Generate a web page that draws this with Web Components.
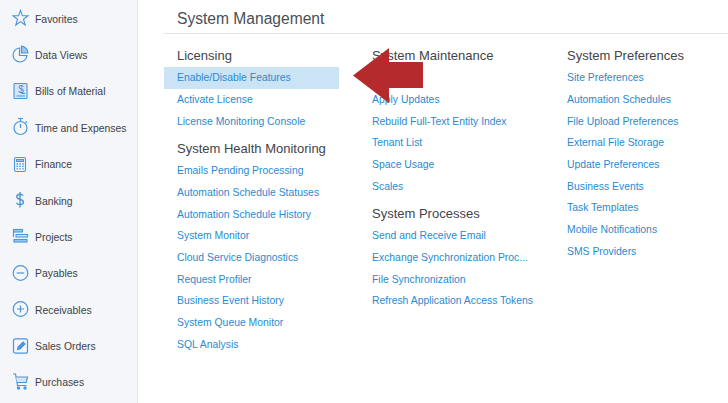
<!DOCTYPE html>
<html><head><meta charset="utf-8">
<style>
html,body{margin:0;padding:0;height:403px;width:728px;overflow:hidden;background:#fff;font-family:"Liberation Sans",Arial,sans-serif}
</style></head><body>
<template id="t-app"><style>
:host{display:flex;width:728px;height:403px;overflow:hidden;position:relative}
</style><slot name="side"></slot><slot></slot><slot name="over"></slot></template>

<template id="t-side"><style>
:host{display:flex;flex-direction:column;flex:none;width:138px;height:403px;box-sizing:border-box;background:#f4f6f9;border-right:1px solid #e4e7ea;padding-top:.9px}
</style><slot></slot></template>

<template id="t-nav"><style>
:host{display:flex;align-items:center;flex:none;height:36.4px;padding-left:10px;gap:5px;font-size:10.4px;color:#3c4248;white-space:nowrap}
.i{width:20px;height:20px;flex:none;display:flex;margin-top:-2px}
</style><span class="i"><slot name="icon"></slot></span><slot></slot></template>

<template id="t-main"><style>
:host{display:block;flex:1;padding:0 0 0 26px;min-width:0}
h1{margin:0;font:400 15.6px/37px "Liberation Sans",Arial,sans-serif;color:#4a4f55;padding-left:13px;border-bottom:1px solid #e3e5e8;height:33px;box-sizing:content-box}
.cols{display:flex;gap:20px;padding-top:10.3px}
</style><h1><slot name="title"></slot></h1><div class="cols"><slot></slot></div></template>

<template id="t-col"><style>
:host{display:block;width:175px;flex:none}
</style><slot></slot></template>

<template id="t-head"><style>
:host{display:block;height:23px;padding-left:13px;font-size:13px;line-height:23px;color:#3f444a;white-space:nowrap}
:host([later]){height:27.8px;line-height:33px}
</style><slot></slot></template>

<template id="t-link"><style>
:host{display:block;height:21.7px;line-height:21.7px;padding-left:13px;font-size:10.4px;color:#2a8ad0;white-space:nowrap;box-sizing:border-box}
:host([active]){background:#cbe4f5}
</style><slot></slot></template>

<template id="t-arrow"><style>
:host{position:absolute;left:353px;top:48px;width:70px;height:55px;display:block}
svg{display:block}
</style><svg width="70" height="55" viewBox="0 0 70 55"><polygon points="0,27.500 36,0 36,14 70,14 70,40 36,40 36,55" fill="#b52b2b"/></svg></template>

<x-app>
<x-side slot="side">
<x-nav><svg slot="icon" width="20" height="20" viewBox="0 0 20 20" fill="none" stroke="#4a96dc" stroke-width="1.1"><polygon points="10.500,2.400 12.400,7.800 18,7.800 13.500,11.200 15.200,17 10.500,13.600 5.800,17 7.500,11.200 3,7.800 8.600,7.800"/></svg>Favorites</x-nav>
<x-nav><svg slot="icon" width="20" height="20" viewBox="0 0 20 20" fill="none" stroke="#4a96dc" stroke-width="1.2"><path d="M9.500 4a7 7 0 1 0 7.500 7.500H9.500z"/><path d="M11.500 2.200a7 7 0 0 1 6.500 6.800h-6.500z" fill="#9cc8ee"/></svg>Data Views</x-nav>
<x-nav><svg slot="icon" width="20" height="20" viewBox="0 0 20 20" fill="none" stroke="#4a96dc" stroke-width="1.1"><rect x="4" y="2.500" width="13" height="15" rx="1" fill="#d5e7f7"/><path d="M6.500 15h8.500M12 12.500h3"/><text x="11" y="11.500" font-size="10" font-family="Liberation Sans" fill="#3a8fd8" stroke="none" text-anchor="middle">$</text></svg>Bills of Material</x-nav>
<x-nav><svg slot="icon" width="20" height="20" viewBox="0 0 20 20" fill="none" stroke="#4a96dc" stroke-width="1.2"><circle cx="10.500" cy="11" r="6.500"/><path d="M10.500 11V7M8 1.500h5M10.500 1.500v3M15.500 4.500l1.400 1.400"/></svg>Time and Expenses</x-nav>
<x-nav><svg slot="icon" width="20" height="20" viewBox="0 0 20 20" fill="none" stroke="#4a96dc" stroke-width="1.1"><rect x="4.500" y="3.500" width="11" height="14" rx="1.500"/><rect x="6.500" y="5.500" width="7" height="2" fill="#9cc8ee"/><path d="M6.500 10h1.500M9.300 10h1.500M12.300 10h1.500M6.500 12.300h1.500M9.300 12.300h1.500M12.300 12.300h1.500M6.500 14.800h1.500M9.300 14.800h1.500M12.300 14.800h1.500" stroke-width="1.300"/></svg>Finance</x-nav>
<x-nav><svg slot="icon" width="20" height="20" viewBox="0 0 20 20" fill="none" stroke="#4a96dc" stroke-width="1.4"><path d="M13 5.800C12.500 4.700 11.300 4.300 10 4.300c-1.900 0-3.200 1-3.200 2.500 0 3.600 6.600 1.700 6.600 5.300 0 1.600-1.500 2.600-3.400 2.600-1.500 0-2.900-.6-3.400-2M10 2v15.500"/></svg>Banking</x-nav>
<x-nav><svg slot="icon" width="20" height="20" viewBox="0 0 20 20" fill="none" stroke="#4a96dc" stroke-width="1.1"><rect x="3.500" y="3.500" width="9" height="2.500" fill="#9cc8ee"/><path d="M3.500 6v5"/><rect x="6" y="8.500" width="11.500" height="2.500" fill="#d5e7f7"/><rect x="4" y="13.500" width="13" height="2.500" fill="#9cc8ee"/></svg>Projects</x-nav>
<x-nav><svg slot="icon" width="20" height="20" viewBox="0 0 20 20" fill="none" stroke="#4a96dc" stroke-width="1.2"><circle cx="10.500" cy="10" r="7.300"/><path d="M6.700 10h7.600"/></svg>Payables</x-nav>
<x-nav><svg slot="icon" width="20" height="20" viewBox="0 0 20 20" fill="none" stroke="#4a96dc" stroke-width="1.2"><circle cx="10.500" cy="10" r="7.300"/><path d="M7 10h7M10.500 6.500v7"/></svg>Receivables</x-nav>
<x-nav><svg slot="icon" width="20" height="20" viewBox="0 0 20 20" fill="none" stroke="#4a96dc" stroke-width="1.200"><rect x="3.500" y="2.800" width="14" height="14.400" rx="2"/><path d="M7.500 13.500l.6-2.500 5-5 1.900 1.900-5 5z" fill="#4a96dc"/></svg>Sales Orders</x-nav>
<x-nav><svg slot="icon" width="20" height="20" viewBox="0 0 20 20" fill="none" stroke="#4a96dc" stroke-width="1.200"><path d="M3 2h2.500l2 11.500h9"/><path d="M6 5h11.500l-1.300 5.500H7" fill="#d5e7f7"/><circle cx="8.500" cy="16" r="1.100" fill="#4a96dc"/><circle cx="15" cy="16" r="1.100" fill="#4a96dc"/></svg>Purchases</x-nav>
</x-side>
<x-main>
<span slot="title">System Management</span>
<x-col>
<x-head>Licensing</x-head>
<x-link active>Enable/Disable Features</x-link>
<x-link>Activate License</x-link>
<x-link>License Monitoring Console</x-link>
<x-head later>System Health Monitoring</x-head>
<x-link>Emails Pending Processing</x-link>
<x-link>Automation Schedule Statuses</x-link>
<x-link>Automation Schedule History</x-link>
<x-link>System Monitor</x-link>
<x-link>Cloud Service Diagnostics</x-link>
<x-link>Request Profiler</x-link>
<x-link>Business Event History</x-link>
<x-link>System Queue Monitor</x-link>
<x-link>SQL Analysis</x-link>
</x-col>
<x-col>
<x-head>System Maintenance</x-head>
<x-link></x-link>
<x-link>Apply Updates</x-link>
<x-link>Rebuild Full-Text Entity Index</x-link>
<x-link>Tenant List</x-link>
<x-link>Space Usage</x-link>
<x-link>Scales</x-link>
<x-head later>System Processes</x-head>
<x-link>Send and Receive Email</x-link>
<x-link>Exchange Synchronization Proc...</x-link>
<x-link>File Synchronization</x-link>
<x-link>Refresh Application Access Tokens</x-link>
</x-col>
<x-col>
<x-head>System Preferences</x-head>
<x-link>Site Preferences</x-link>
<x-link>Automation Schedules</x-link>
<x-link>File Upload Preferences</x-link>
<x-link>External File Storage</x-link>
<x-link>Update Preferences</x-link>
<x-link>Business Events</x-link>
<x-link>Task Templates</x-link>
<x-link>Mobile Notifications</x-link>
<x-link>SMS Providers</x-link>
</x-col>
</x-main>
<x-arrow slot="over"></x-arrow>
</x-app>
<script>
for (const [tag,id] of [['x-app','t-app'],['x-side','t-side'],['x-nav','t-nav'],['x-main','t-main'],['x-col','t-col'],['x-head','t-head'],['x-link','t-link'],['x-arrow','t-arrow']]) {
  customElements.define(tag, class extends HTMLElement {
    constructor(){super();this.attachShadow({mode:'open'}).appendChild(document.getElementById(id).content.cloneNode(true));}
  });
}
</script>
</body></html>
